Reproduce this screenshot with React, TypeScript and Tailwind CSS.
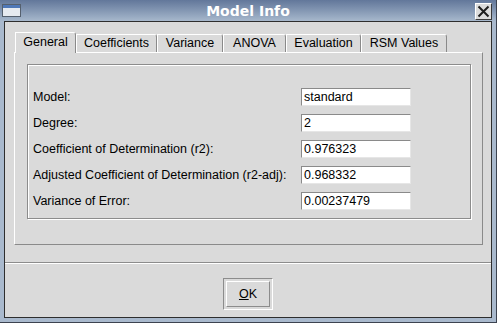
import React from "react";

const tabs = [
  { label: "General", w: "w-[61px]", selected: true },
  { label: "Coefficients", w: "w-[81px]", selected: false },
  { label: "Variance", w: "w-[66px]", selected: false },
  { label: "ANOVA", w: "w-[63px]", selected: false },
  { label: "Evaluation", w: "w-[75px]", selected: false },
  { label: "RSM Values", w: "w-[86px]", selected: false },
];

const rows = [
  { label: "Model:", value: "standard" },
  { label: "Degree:", value: "2" },
  { label: "Coefficient of Determination (r2):", value: "0.976323" },
  { label: "Adjusted Coefficient of Determination (r2-adj):", value: "0.968332" },
  { label: "Variance of Error:", value: "0.00237479" },
];

const WindowIcon = () => (
  <svg width="19" height="13" viewBox="0 0 19 13">
    <rect x="0.5" y="0.5" width="18" height="12" fill="#e6eaf0" stroke="#55606e" />
    <rect x="1" y="1" width="17" height="3" fill="#4f78b8" />
  </svg>
);

const CloseButton = () => (
  <div className="w-[17px] h-[17px] bg-[#dcdcdc] border border-t-white border-l-white border-r-[#3a3a3a] border-b-[#3a3a3a] flex items-center justify-center">
    <svg width="13" height="13" viewBox="0 0 13 13">
      <path d="M1.5 1.5 L11.5 11.5 M11.5 1.5 L1.5 11.5" stroke="#1e1e1e" strokeWidth="2" />
    </svg>
  </div>
);

export default function App() {
  return (
    <div
      className="w-[497px] h-[323px] bg-[#a9b9cd] border-r border-b border-[#3c4350] flex flex-col overflow-hidden text-black"
      style={{ fontFamily: '"Liberation Sans", Arial, sans-serif' }}
    >
      {/* title bar */}
      <div className="h-[21px] shrink-0 relative flex items-center justify-center bg-gradient-to-b from-[#62779a] to-[#a7b8cc]">
        <div className="absolute left-[2px] top-[4px]">
          <WindowIcon />
        </div>
        <span
          className="text-white text-[14px] font-bold leading-none"
          style={{ fontFamily: '"DejaVu Sans", sans-serif' }}
        >
          Model Info
        </span>
        <div className="absolute right-[4px] top-[3px]">
          <CloseButton />
        </div>
      </div>

      {/* body */}
      <div className="mx-[4px] mb-[4px] flex-1 border border-[#2e2e2e] bg-[#dadada] flex flex-col">
        <div className="pt-[10px] pl-[9px]">
          <div className="flex items-end h-[20px] pl-px">
            {tabs.map((t) =>
              t.selected ? (
                <div
                  key={t.label}
                  className={`${t.w} h-[21px] -mb-px relative z-10 bg-[#dadada] border-l border-t border-r border-l-white border-t-white border-r-[#8a8a8a] rounded-tr-[3px] flex items-center justify-center text-[12.5px] pb-[2px]`}
                >
                  {t.label}
                </div>
              ) : (
                <div
                  key={t.label}
                  className={`${t.w} h-[18px] border-l border-t border-r border-l-white border-t-white border-r-[#8a8a8a] rounded-tr-[3px] flex items-center justify-center text-[12.5px]`}
                >
                  {t.label}
                </div>
              )
            )}
          </div>
          <div className="w-[469px] h-[193px] border border-t-white border-l-white border-r-[#8a8a8a] border-b-[#8a8a8a] pt-[11px] pl-[12px]">
            <div className="w-[444px] h-[155px] border border-[#8c8c8c] shadow-[inset_1px_1px_0_#fff,1px_1px_0_#fff] pt-[23px] pl-[5px] flex flex-col gap-[8px]">
              {rows.map((r) => (
                <div key={r.label} className="flex items-center h-[18px]">
                  <div className="w-[268px] text-[12.5px] leading-none">{r.label}</div>
                  <div className="w-[110px] h-[18px] bg-white border border-t-[#8a8a8a] border-l-[#8a8a8a] border-r-[#e6e6e6] border-b-[#e6e6e6] pl-[2px] flex items-center text-[12.5px] leading-none">
                    {r.value}
                  </div>
                </div>
              ))}
            </div>
          </div>
        </div>

        <div className="mt-[17px] border-t border-b border-t-[#8c8c8c] border-b-white" />

        <div className="mt-[14px] flex justify-center">
          <div className="w-[50px] h-[32px] border border-t-[#8c8c8c] border-l-[#8c8c8c] border-r-white border-b-white p-[2px]">
            <button className="w-full h-full border border-t-white border-l-white border-r-[#8c8c8c] border-b-[#8c8c8c] flex items-center justify-center text-[12.5px] bg-[#dadada]">
              <span>
                <span className="underline">O</span>K
              </span>
            </button>
          </div>
        </div>
      </div>
    </div>
  );
}
